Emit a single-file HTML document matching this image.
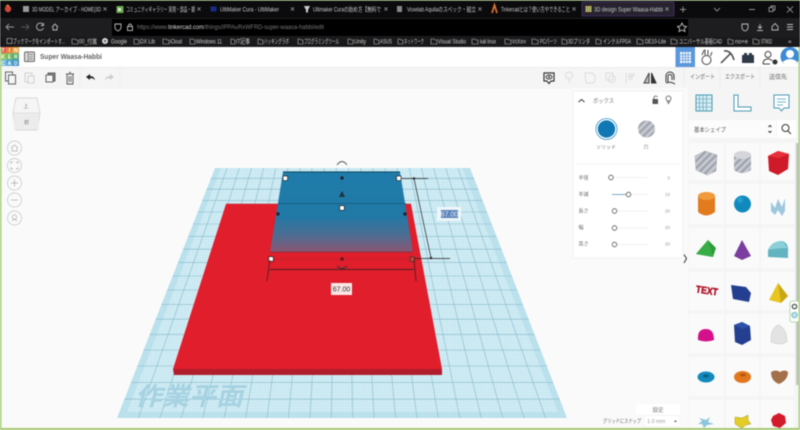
<!DOCTYPE html>
<html><head><meta charset="utf-8"><style>
html,body{margin:0;padding:0;width:800px;height:430px;overflow:hidden;background:#fafafa}
svg{display:block;filter:blur(.45px)}
text{font-family:"Liberation Sans","Noto Sans CJK JP",sans-serif}
</style></head><body>
<svg width="800" height="430" viewBox="0 0 800 430" xmlns="http://www.w3.org/2000/svg">
<defs>
<linearGradient id="bg" x1="0" y1="0" x2="0" y2="1"><stop offset="0" stop-color="#1f7dab"/><stop offset=".55" stop-color="#2179a6"/><stop offset=".8" stop-color="#4f6c92"/><stop offset="1" stop-color="#8c5570"/></linearGradient>
<pattern id="st" width="5" height="5" patternUnits="userSpaceOnUse" patternTransform="rotate(45)"><rect width="5" height="5" fill="#c6c9d0"/><rect width="2.2" height="5" fill="#9da2ac"/></pattern>
<pattern id="mn" width="2.6" height="2.6" patternUnits="userSpaceOnUse"><path d="M0 0H2.6M0 0V2.6" stroke="#9fd2e2" stroke-width=".35"/></pattern>
<clipPath id="pl"><polygon points="215,168 470,168 567,418 117,418"/></clipPath>
</defs>

<rect width="800" height="430" fill="#fafafa"/>

<!-- workplane -->
<polygon points="215,168 470,168 567,418 117,418" fill="#bfe3ee"/>
<polygon points="221,168 462,168 558,412 127,412" fill="#d3edf5"/>
<polygon points="215,168 470,168 567,418 117,418" fill="url(#mn)"/>
<g clip-path="url(#pl)" stroke="#86b9c9" stroke-width=".6" fill="none">
<path d="M0 178.4H800M0 189.2H800M0 200.4H800M0 212H800M0 224H800M0 236.4H800M0 249.2H800M0 262.4H800M0 276H800M0 290H800M0 304.4H800M0 319.2H800M0 334.4H800M0 350H800M0 366H800M0 382.4H800M0 399.2H800"/>
<path d="M227.1 168L138.4 418M239.3 168L159.9 418M251.4 168L181.3 418M263.6 168L202.7 418M275.7 168L224.1 418M287.9 168L245.6 418M300 168L267 418M312.1 168L288.4 418M324.3 168L309.9 418M336.4 168L331.3 418M348.6 168L352.7 418M360.7 168L374.1 418M372.9 168L395.6 418M385 168L417 418M397.1 168L438.4 418M409.3 168L459.9 418M421.4 168L481.3 418M433.6 168L502.7 418M445.7 168L524.1 418M457.9 168L545.6 418"/>
</g>
<text x="135" y="405" font-size="25" font-weight="700" fill="#a6d2e2" textLength="108" lengthAdjust="spacingAndGlyphs" style="font-style:italic">作業平面</text>

<!-- red box -->
<polygon points="173,369 442,369 442,375 174,375" fill="#b01e2e"/>
<polygon points="226,204 411,204 442,369 173,369" fill="#e01e2c"/>
<path d="M226 204H411" stroke="#c91b28" stroke-width=".6"/>

<!-- blue box -->
<polygon points="283,172 400,172 413,252 270,252" fill="url(#bg)"/>
<path d="M283 172H400" stroke="#12506f" stroke-width="1.2"/>
<path d="M278 203.5H406" stroke="#15587c" stroke-width=".7"/>
<path d="M270 252H413" stroke="#7a3040" stroke-width=".7"/>
<path d="M272 259H412" stroke="#b5202c" stroke-width=".6"/>
<!-- handles -->
<g fill="#223">
<circle cx="342" cy="178" r="1.7"/><circle cx="278" cy="214" r="1.7"/><circle cx="405" cy="214" r="1.7"/><circle cx="342" cy="259" r="1.7" fill="#5a1a20"/>
<polygon points="342,191 345,197 339,197" fill="#1c3340"/>
</g>
<g fill="#fff" stroke="#222" stroke-width=".7">
<rect x="283" y="176" width="4.600" height="4.600"/><rect x="396.500" y="176" width="4.600" height="4.600"/><rect x="268.700" y="256.700" width="4.600" height="4.600"/><rect x="339.700" y="205.700" width="4.600" height="4.600"/>
</g>
<rect x="410" y="257" width="4.600" height="4.600" fill="#d04030" stroke="#333" stroke-width=".7"/>
<path d="M337 165Q342 158 347 165" stroke="#555" fill="none" stroke-width=".9"/>
<path d="M337 266Q342 271 347 266" stroke="#333" fill="none" stroke-width=".9"/>
<!-- dims -->
<g stroke="#222" stroke-width=".7" fill="none">
<path d="M401 178.5H428M414 178.5L431 258M414 258.5H450"/>
<path d="M270 269.5H414M270 260L267 281M414 260L416 281"/>
</g>
<circle cx="414" cy="178.5" r="1.2" fill="#222"/><circle cx="431" cy="258" r="1.2" fill="#222"/>
<rect x="437" y="207" width="24" height="14" fill="#eef6f9"/>
<rect x="441" y="210" width="17" height="8" fill="#5a82b8"/>
<text x="449.500" y="216.500" font-size="7" fill="#e8eef8" text-anchor="middle">67.00</text>
<rect x="331" y="283" width="21" height="12" fill="#fbe6e6"/>
<text x="341.500" y="291.500" font-size="7" fill="#333" text-anchor="middle">67.00</text>

<!-- view cube -->
<path d="M16 98H37L40 113L38 128Q38 130 36 130H17Q15 130 15 128L13 113Z" fill="#f5f5f5" stroke="#cfcfcf" stroke-width=".7"/>
<path d="M13 113H40" stroke="#d8d8d8" stroke-width=".7"/>
<rect x="14" y="113.500" width="25" height="16" fill="#ececec"/>
<text x="26" y="108" font-size="5" fill="#777" text-anchor="middle">上</text>
<text x="26.500" y="124" font-size="5" fill="#777" text-anchor="middle">前</text>
<g fill="#fafafa" stroke="#c4c4c4" stroke-width=".7">
<circle cx="14.500" cy="148" r="7"/><circle cx="14.500" cy="165.500" r="7"/><circle cx="14.500" cy="183" r="7"/><circle cx="14.500" cy="200" r="7"/><circle cx="14.500" cy="218" r="7"/>
</g>
<g stroke="#aaa" stroke-width=".7" fill="none">
<path d="M11 148L14.500 145L18 148M12 148V151H17V148"/>
<path d="M11 164V162H13M16 162H18V164M18 167V169H16M13 169H11V167"/>
<path d="M14.500 179.500V186.500M11 183H18"/><path d="M11 200H18"/>
<circle cx="14.500" cy="217" r="2.200"/><path d="M12 221L14.500 219L17 221"/>
</g>

<!-- chrome -->
<rect x="0" y="0" width="800" height="47" fill="#0b0b0d"/>
<rect x="0" y="18" width="800" height="19" fill="#1d1d20"/>
<rect x="112" y="19" width="576" height="17" fill="#000"/>
<rect x="0" y="37" width="800" height="10" fill="#19191b"/>
<rect x="582" y="2" width="92" height="14" rx="1" fill="#26232e" stroke="#4c2f78" stroke-width=".8"/>

<!-- tabs -->
<circle cx="8" cy="9" r="3.200" fill="#d0453a"/><path d="M6 6L8 5L9.500 7" stroke="#f09030" fill="none"/>
<rect x="23" y="6" width="6" height="6" fill="#999"/><rect x="116.500" y="6" width="7" height="7" fill="#6aa84f"/><rect x="118" y="8" width="3" height="3" fill="#dcecd0"/>
<rect x="210.500" y="6.500" width="6" height="5" fill="#1a2a8c"/><path d="M304 6H310L308 10H306ZM306 10V12.500H308V10" fill="#ccc"/>
<rect x="397" y="6" width="5" height="6" fill="#888"/><path d="M492 13L494.500 5L497 13" fill="none" stroke="#e8762c" stroke-width="1.600"/>
<rect x="585.500" y="6" width="6" height="6" fill="#e8b83a"/>
<path d="M587.500 6V12M589.500 6V12M585.500 8H591.500M585.500 10H591.500" stroke="#3a8fb5" stroke-width=".6"/>
<g font-size="6.300" fill="#c9c9c9">
<text x="32" y="11.500" textLength="69" lengthAdjust="spacingAndGlyphs">3D MODEL アーカイブ - HOME|3D</text>
<text x="126" y="11.500" textLength="69" lengthAdjust="spacingAndGlyphs">コミュニティギャラリー 実用・部品・雑</text>
<text x="220" y="11.500" textLength="59" lengthAdjust="spacingAndGlyphs">UltiMaker Cura - UltiMaker</text>
<text x="313" y="11.500" textLength="68" lengthAdjust="spacingAndGlyphs">Ultimaker Curaの始め方【無料で</text>
<text x="407" y="11.500" textLength="69" lengthAdjust="spacingAndGlyphs">Voxelab Aquilaのスペック・組立</text>
<text x="501" y="11.500" textLength="69" lengthAdjust="spacingAndGlyphs">Tinkercadとは？使い方やできること</text>
<text x="594" y="11.500" textLength="69" lengthAdjust="spacingAndGlyphs">3D design Super Waasa-Habbi</text>
</g>
<g stroke="#bbb" stroke-width=".7" fill="none">
<path d="M103.500 7.500L106.500 10.500M106.500 7.500L103.500 10.500M197.500 7.500L200.500 10.500M200.500 7.500L197.500 10.500M291 7.500L294 10.500M294 7.500L291 10.500M384.500 7.500L387.500 10.500M387.500 7.500L384.500 10.500M478.500 7.500L481.500 10.500M481.500 7.500L478.500 10.500M572.500 7.500L575.500 10.500M575.500 7.500L572.500 10.500M665.500 7.500L668.500 10.500M668.500 7.500L665.500 10.500"/>
<path d="M683 6.500V12.500M680 9.500H686M714 8L717 11L720 8M749 9.500H755"/>
<rect x="769" y="7.500" width="4" height="4"/><path d="M771 7.500V6H775V10H773"/>
<path d="M787 6.500L793 12.500M793 6.500L787 12.500"/>
</g>
<!-- nav -->
<g stroke="#bdbdbd" stroke-width=".9" fill="none">
<path d="M14 27H6M9 24L6 27L9 30" stroke="#999"/><path d="M21 27H29M26 24L29 27L26 30" stroke="#555"/>
<path d="M43 24.500A3.600 3.600 0 1 0 43.500 28M43.500 23V25.500H41"/>
<path d="M52 27L55 24L58 27M53 27V30H57V27"/>
<path d="M115 24H121V27.500Q121 29.500 118 31Q115 29.500 115 27.500Z"/>
<rect x="127.500" y="26.500" width="5" height="4"/><path d="M128.500 26.500V25Q130 23 131.500 25V26.500"/>
<path d="M682 23L683.500 26L686.500 26.500L684.300 28.500L685 31.500L682 30L679 31.500L679.700 28.500L677.500 26.500L680.500 26Z"/>
<path d="M742 24H748V27.500Q748 30 745 31Q742 30 742 27.500Z"/><path d="M760 24V28M758 26.500L760 28.500L762 26.500M757 30.500H763"/>
<path d="M775 23.500L778 26.500V30H772V26.500Z"/><path d="M787 24.500H793M787 27H793M787 29.500H793"/>
</g>
<text x="137" y="29" font-size="6.300" fill="#777" textLength="187" lengthAdjust="spacingAndGlyphs">https://www.<tspan fill="#ddd">tinkercad.com</tspan>/things/IPPAuRxWFRD-super-waasa-habbi/edit</text>

<!-- bookmarks -->
<g font-size="6.400" fill="#cfcfcf">
<text x="13" y="43.500" textLength="52" lengthAdjust="spacingAndGlyphs">ブックマークをインポートす...</text>
<text x="79" y="43.500" textLength="18" lengthAdjust="spacingAndGlyphs">00_付属</text>
<text x="111" y="43.500" textLength="16" lengthAdjust="spacingAndGlyphs">Google</text>
<text x="140" y="43.500" textLength="15" lengthAdjust="spacingAndGlyphs">DX Lib</text>
<text x="170" y="43.500" textLength="12" lengthAdjust="spacingAndGlyphs">iCloud</text>
<text x="196" y="43.500" textLength="26" lengthAdjust="spacingAndGlyphs">Windows 11</text>
<text x="236" y="43.500" textLength="14" lengthAdjust="spacingAndGlyphs">IT記事</text>
<text x="264" y="43.500" textLength="25" lengthAdjust="spacingAndGlyphs">ハッキングラボ</text>
<text x="304" y="43.500" textLength="35" lengthAdjust="spacingAndGlyphs">プログラミングツール</text>
<text x="354" y="43.500" textLength="12" lengthAdjust="spacingAndGlyphs">Unity</text>
<text x="380" y="43.500" textLength="12" lengthAdjust="spacingAndGlyphs">ASUS</text>
<text x="404" y="43.500" textLength="20" lengthAdjust="spacingAndGlyphs">ネットワーク</text>
<text x="438" y="43.500" textLength="28" lengthAdjust="spacingAndGlyphs">Visual Studio</text>
<text x="480" y="43.500" textLength="16" lengthAdjust="spacingAndGlyphs">kali linux</text>
<text x="512" y="43.500" textLength="14" lengthAdjust="spacingAndGlyphs">VcXsrv</text>
<text x="540" y="43.500" textLength="17" lengthAdjust="spacingAndGlyphs">PCパーツ</text>
<text x="568" y="43.500" textLength="22" lengthAdjust="spacingAndGlyphs">3Dプリンタ</text>
<text x="603" y="43.500" textLength="28" lengthAdjust="spacingAndGlyphs">インテルFPGA</text>
<text x="645" y="43.500" textLength="21" lengthAdjust="spacingAndGlyphs">DE10-Lite</text>
<text x="679" y="43.500" textLength="43" lengthAdjust="spacingAndGlyphs">ユニバーサル基板CAD</text>
<text x="735" y="43.500" textLength="13" lengthAdjust="spacingAndGlyphs">no+e</text>
<text x="761" y="43.500" textLength="11" lengthAdjust="spacingAndGlyphs">STM32</text>
<text x="788" y="43.500">»</text>
</g>
<circle cx="105" cy="41" r="3" fill="#ddd"/><circle cx="105" cy="41" r="1.300" fill="#777"/>
<rect x="7" y="38.500" width="5" height="5" fill="none" stroke="#aaa" stroke-width=".7"/>
<path d="M72 39H75L76 40H78V44H72ZM134 39H137L138 40H139V44H134ZM163 39H166L167 40H169V44H163ZM190 39H193L194 40H195V44H190ZM231 39H233L234 40H235V44H231ZM258 39H260L261 40H263V44H258ZM298 39H300L301 40H303V44H298ZM348 39H350L351 40H353V44H348ZM374 39H376L377 40H379V44H374ZM398 39H400L401 40H403V44H398ZM431 39H434L435 40H437V44H431ZM472 39H475L476 40H478V44H472ZM505 39H508L509 40H511V44H505ZM532 39H535L536 40H538V44H532ZM562 39H564L565 40H567V44H562ZM596 39H598L599 40H601V44H596ZM637 39H640L641 40H643V44H637ZM671 39H674L675 40H677V44H671ZM728 39H730L731 40H733V44H728ZM753 39H756L757 40H759V44H753Z" fill="none" stroke="#bbb" stroke-width=".6"/>

<!-- app header -->
<rect x="0" y="47" width="800" height="20" fill="#fff"/>
<rect x="0" y="67" width="800" height="21" fill="#f5f5f5"/>
<path d="M0 67.500H800" stroke="#e4e4e4" stroke-width=".6"/><path d="M0 88H572" stroke="#ededed" stroke-width=".6"/>
<g>
<rect x="0" y="47" width="6.300" height="6.300" fill="#e2574c"/><rect x="6.300" y="47" width="6.300" height="6.300" fill="#e8803a"/><rect x="12.600" y="47" width="6.400" height="6.300" fill="#eaa33c"/>
<rect x="0" y="53.300" width="6.300" height="6.300" fill="#8bc34a"/><rect x="6.300" y="53.300" width="6.300" height="6.300" fill="#69b356"/><rect x="12.600" y="53.300" width="6.400" height="6.300" fill="#4fa86a"/>
<rect x="0" y="59.600" width="6.300" height="6.400" fill="#6cb8dc"/><rect x="6.300" y="59.600" width="6.300" height="6.400" fill="#4aa2d2"/><rect x="12.600" y="59.600" width="6.400" height="6.400" fill="#3a8cc8"/>
<g font-size="5" font-weight="700" fill="#fff" text-anchor="middle"><text x="3.100" y="52.200">T</text><text x="9.400" y="52.200">I</text><text x="15.800" y="52.200">N</text><text x="3.100" y="58.500">K</text><text x="9.400" y="58.500">E</text><text x="15.800" y="58.500">R</text><text x="3.100" y="64.800">C</text><text x="9.400" y="64.800">A</text><text x="15.800" y="64.800">D</text></g>
</g>
<rect x="24.500" y="52" width="10" height="9.500" rx="1" fill="#ddd" stroke="#666" stroke-width="1"/><path d="M28 52V61.500M29 54.500H33M29 56.800H33M29 59H33" stroke="#666" stroke-width=".7"/>
<text x="40" y="59" font-size="7.500" font-weight="700" fill="#666" textLength="62" lengthAdjust="spacingAndGlyphs">Super Waasa-Habbi</text>

<rect x="675.500" y="47" width="19.500" height="20" fill="#5a97db"/>
<path d="M680 52H691V63H680Z" fill="#fff"/><path d="M682.800 52V63M685.500 52V63M688.200 52V63M680 54.800H691M680 57.500H691M680 60.200H691" stroke="#5a97db" stroke-width=".8"/>
<g stroke="#444" fill="none" stroke-width="1">
<circle cx="706.500" cy="60" r="4.500"/><path d="M702 55L704 50M705 55V49.500M708 55V50M710.500 56L712 52"/>
<path d="M721 63L731 53M724 51Q731 50 734 60" stroke-width="1.500"/>
<path d="M742 55H754V63H742Z" fill="#2e3a48" stroke="none"/><path d="M744 53H747V55H744ZM749 53H752V55H749Z" fill="#2e3a48" stroke="none"/>
<circle cx="768" cy="54.500" r="3"/><path d="M763 64Q763 59 768 59Q771 59 772 61M763 64H770"/>
</g>
<circle cx="775" cy="62" r="2.500" fill="#333"/>
<circle cx="790" cy="56.500" r="9.500" fill="#3d8ad6"/><circle cx="790" cy="54" r="4" fill="#fff"/><path d="M782.500 62Q790 56 797.500 62L794 66H786Z" fill="#fff"/>

<!-- toolbar left -->
<g fill="none" stroke="#555" stroke-width=".9">
<rect x="5.500" y="72" width="7" height="9"/><rect x="8.500" y="75" width="7" height="9" fill="#f5f5f5"/>
<g stroke="#ccc"><rect x="25" y="73" width="7" height="9"/><rect x="28" y="76" width="6" height="7" fill="#f5f5f5"/></g>
<rect x="48" y="73" width="7" height="8" fill="#888"/><rect x="46" y="75" width="7" height="7" fill="#f5f5f5"/>
<path d="M66 74H74M67 74.500V84H73V74.500M69 72.500H71M69 76V82M71 76V82"/>
</g>
<path d="M86 77L90 74V76Q94 76 95 80Q93 78 90 78V80Z" fill="#222"/>
<path d="M114 77L110 74V76Q106 76 105 80Q107 78 110 78V80Z" fill="#ccc"/>
<path d="M80 68V87M120 68V87" stroke="#e9e9e9" stroke-width=".6"/>

<!-- toolbar right -->
<g fill="none" stroke-width="1">
<path d="M544 73H554V81H551L549 83.500L547 81H544Z" stroke="#333" stroke-width="1.200" fill="#fff"/><ellipse cx="549" cy="77" rx="3" ry="2" stroke="#333"/><circle cx="549" cy="77" r="1" fill="#333" stroke="none"/>
<g stroke="#ddd"><circle cx="569" cy="75.500" r="3.500"/><path d="M569 79V83"/><path d="M585 73H592L595 76V81L593 83H586Z"/><rect x="606" y="73" width="7" height="7"/><circle cx="612" cy="79" r="3.500"/><path d="M626 73V83M628 74H634V76H628M628 77H632V79H628"/></g>
<path d="M649 73L644 83H649Z" stroke="#444" fill="#bbb"/><path d="M651.500 73L656 83H651.500Z" fill="#333" stroke="#333"/>
<path d="M666 82V76A4 4 0 0 1 674 76V80M668 82V76.500A2 2 0 0 1 672 76.500V80M666 83Q670 81 675 84" stroke="#333"/>
</g>
<path d="M684 68V87" stroke="#e7e7e7" stroke-width=".6"/>
<path d="M720 68V87M760 68V87" stroke="#e7e7e7" stroke-width=".6"/>
<g font-size="6" fill="#666">
<text x="690" y="79" textLength="25" lengthAdjust="spacingAndGlyphs">インポート</text>
<text x="725" y="79" textLength="30" lengthAdjust="spacingAndGlyphs">エクスポート</text>
<text x="769" y="79" textLength="18" lengthAdjust="spacingAndGlyphs">送信先</text>
</g>

<!-- inspector -->
<rect x="573" y="91" width="110" height="167" fill="#fff" stroke="#ececec" stroke-width=".7"/>
<path d="M578.500 102L581.500 99.500L584.500 102" fill="none" stroke="#333" stroke-width="1"/>
<text x="593" y="103" font-size="6" fill="#777" textLength="21" lengthAdjust="spacingAndGlyphs">ボックス</text>
<rect x="652.500" y="99" width="5.500" height="5" fill="#555"/><path d="M654 99V97Q655.500 95 657.500 97" stroke="#555" fill="none" stroke-width=".8"/>
<circle cx="668.500" cy="98.500" r="2.500" fill="none" stroke="#777"/><path d="M667 100.500L668.500 103.500L670 100.500" fill="none" stroke="#777"/>
<circle cx="606.500" cy="129" r="10.500" fill="#fff" stroke="#2f92c4" stroke-width=".8"/><circle cx="606.500" cy="129" r="8.700" fill="#0f78b4"/>
<circle cx="646.500" cy="129" r="8.500" fill="url(#st)"/>
<text x="606" y="149" font-size="5" fill="#777" text-anchor="middle">ソリッド</text>
<text x="646" y="149" font-size="5" fill="#777" text-anchor="middle">穴</text>
<path d="M576 164H680" stroke="#f3f3f3"/>
<g font-size="5" fill="#666">
<text x="578.500" y="179.500">半径</text><text x="578.500" y="196">半減</text><text x="578.500" y="212.500">長さ</text><text x="578.500" y="229">幅</text><text x="578.500" y="245.500">高さ</text>
</g>
<g font-size="4.500" fill="#999" text-anchor="end"><text x="670" y="179.500">0</text><text x="670" y="196">10</text><text x="670" y="212.500">20</text><text x="670" y="229">20</text><text x="670" y="245.500">20</text></g>
<g stroke="#eeeeee" stroke-width=".7"><path d="M611 177.500H648M628 194.500H648M614 211H648M614 228H648M614 244.500H648"/></g>
<path d="M612 194.500H628" stroke="#5f93ad" stroke-width=".8"/>
<g fill="#fff" stroke="#555" stroke-width=".8"><circle cx="611" cy="177.500" r="2.300"/><circle cx="628.500" cy="194.500" r="2.300"/><circle cx="614.500" cy="211" r="2.300"/><circle cx="614.500" cy="228" r="2.300"/><circle cx="614.500" cy="244.500" r="2.300"/></g>
<path d="M684 254.500L686.500 258.500L684 263" fill="none" stroke="#333" stroke-width="1"/>

<!-- right panel -->
<rect x="688" y="88" width="112" height="342" fill="#f5f5f6"/>
<g stroke="#4b9ab2" stroke-width="1" fill="none">
<path d="M696 95H712V111H696Z" fill="#d9edf3"/><path d="M699.500 95V111M703 95V111M706.500 95V111M696 99H712M696 103H712M696 107H712" stroke-width=".6"/>
<path d="M734 95H738V107H751V111H734Z" fill="#fff"/>
<path d="M774 95H789V108H784L781.500 111L779 108H774Z" fill="#fff"/><path d="M777 99H786M777 102H786M777 105H783" stroke-width=".7"/>
</g>
<rect x="689" y="120" width="87" height="18" fill="#fff" opacity=".7"/>
<text x="694" y="132" font-size="6" fill="#555" textLength="32" lengthAdjust="spacingAndGlyphs">基本シェイプ</text>
<path d="M768.500 127L770 125.500L771.500 127M768.500 131L770 132.500L771.500 131" fill="none" stroke="#333" stroke-width="1"/>
<rect x="777" y="120" width="19" height="18" fill="#fff"/><circle cx="785.500" cy="128" r="3.500" fill="none" stroke="#333" stroke-width="1"/><path d="M788 131L791 134" stroke="#333" stroke-width="1"/>
<g fill="#fafafb">
<rect x="689" y="143" width="35" height="37"/><rect x="726" y="143" width="33" height="37"/><rect x="761" y="143" width="33" height="37"/>
<rect x="689" y="184" width="35" height="40"/><rect x="726" y="184" width="33" height="40"/><rect x="761" y="184" width="33" height="40"/>
<rect x="689" y="228" width="35" height="40"/><rect x="726" y="228" width="33" height="40"/><rect x="761" y="228" width="33" height="40"/>
<rect x="689" y="272" width="35" height="38"/><rect x="726" y="272" width="33" height="38"/><rect x="761" y="272" width="33" height="38"/>
<rect x="689" y="314" width="35" height="39"/><rect x="726" y="314" width="33" height="39"/><rect x="761" y="314" width="33" height="39"/>
<rect x="689" y="357" width="35" height="39"/><rect x="726" y="357" width="33" height="39"/><rect x="761" y="357" width="33" height="39"/>
<rect x="689" y="400" width="35" height="30"/><rect x="726" y="400" width="33" height="30"/><rect x="761" y="400" width="33" height="30"/>
</g>
<rect x="796" y="143" width="2.500" height="242" fill="#c4c4c4"/>

<!-- shapes -->
<polygon points="695,156 705,151 717,155 716,171 707,175 696,170" fill="url(#st)" stroke="#aaa" stroke-width=".5"/>
<path d="M734 155Q742 148 751 155V170Q742 176 734 170Z" fill="url(#st)"/><ellipse cx="742.500" cy="155" rx="8.500" ry="4" fill="#d4d6da"/>
<polygon points="768,156 778,151 789,154 788,169 778,175 769,171" fill="#cf1b29"/><polygon points="768,156 778,151 789,154 779,158" fill="#e8303a"/>
<path d="M698 196V212Q706 219 715 212V196Z" fill="#e27b1d"/><ellipse cx="706.500" cy="196" rx="8.500" ry="4" fill="#f09a3e"/>
<circle cx="742.500" cy="204" r="8.500" fill="#1289bd"/><circle cx="740" cy="200" r="3" fill="#2ba6d6" opacity=".7"/>
<path d="M771 202L775 208L778 199L782 207L785 198V211L782 216L778 210L775 215L771 211Z" fill="#9cc7dc"/>
<polygon points="696,254 708,240 716,248 713,257" fill="#2d9c3a"/><polygon points="696,254 713,257 708,240" fill="#38ad46"/>
<polygon points="742,240 734,256 742,260 751,256" fill="#7b3ea0"/>
<path d="M768 257V250Q772 241 782 241Q789 243 788 252V258Z" fill="#63b3c0"/><path d="M768 250Q772 241 782 241L788 248Q778 248 768 250Z" fill="#8ccfd8"/>
<text x="696" y="294" font-size="10" font-weight="700" fill="#b11427" stroke="#b11427" stroke-width=".5" textLength="22" lengthAdjust="spacingAndGlyphs" transform="rotate(8 707 290)">TEXT</text>
<polygon points="731,285 746,287 751,293 749,302 733,299" fill="#243f8f"/>
<polygon points="778,283 769,300 781,303 788,296" fill="#e8c61f"/><polygon points="778,283 781,303 788,296" fill="#c9a818"/>
<path d="M698 340Q697 329 706 329Q714 329 714 340Q706 343 698 340Z" fill="#d4118a"/>
<polygon points="734,325 742,322 750,326 751,340 742,345 735,342" fill="#243f8f"/><polygon points="734,325 742,322 750,326 742,329" fill="#2f51a8"/>
<path d="M771 342Q771 326 779 325Q787 329 787 342Q779 346 771 342Z" fill="#e3e3e3" stroke="#bbb" stroke-width=".4"/>
<ellipse cx="706" cy="377" rx="8.500" ry="5.500" fill="#1289bd"/><ellipse cx="706" cy="376" rx="3" ry="1.500" fill="#0a5e84"/>
<ellipse cx="742.500" cy="377" rx="8.500" ry="6" fill="#e2771e"/><ellipse cx="743" cy="375" rx="3" ry="1.500" fill="#b2570f"/>
<path d="M771 372Q776 369 780 372Q785 369 788 372Q788 380 779 384Q771 381 771 372Z" fill="#a4704a"/>
<polygon points="699,418 706,420 710,417 708,422 714,424 707,425 704,428 702,424 698,424 702,421" fill="#8cc6da"/>
<polygon points="735,417 742,418 748,415 748,420 751,424 746,425 742,428 738,426 735,424" fill="#e3cc28" stroke="#9a8a10" stroke-width=".4"/>
<polygon points="773,416 779,413 785,416 786,423 780,428 773,426 771,420" fill="#d31b2c"/>

<rect x="790" y="301" width="9" height="21" rx="2" fill="#fff" stroke="#a8d098" stroke-width=".8"/>
<circle cx="794.500" cy="306.500" r="2.200" fill="none" stroke="#444" stroke-width="1.200"/><circle cx="794.500" cy="315" r="2.800" fill="#bfe0ea" stroke="#5aa8c0" stroke-width=".7"/>

<!-- bottom right -->
<rect x="636" y="404" width="44" height="10.500" fill="#fff"/>
<text x="658" y="412" font-size="5.500" fill="#777" text-anchor="middle">設定</text>
<text x="603" y="423" font-size="5.500" fill="#666" textLength="38" lengthAdjust="spacingAndGlyphs">グリッドにスナップ</text>
<rect x="644" y="415.500" width="36" height="11" fill="#fff" stroke="#eee" stroke-width=".5"/>
<text x="647" y="423" font-size="5.500" fill="#999">1.0 mm</text>
<path d="M674 422L675.500 420L677 422Z" fill="#666"/>

<!-- window border -->
<rect x="0" y="47" width="1.500" height="383" fill="#a5cf7a"/>
<rect x="0" y="428" width="800" height="2" fill="#a5c870"/>
<rect x="798.500" y="47" width="1.500" height="383" fill="#a5cf7a"/>
<rect x="0" y="0" width="800" height=".8" fill="#7f9a58"/>
</svg>
</body></html>
